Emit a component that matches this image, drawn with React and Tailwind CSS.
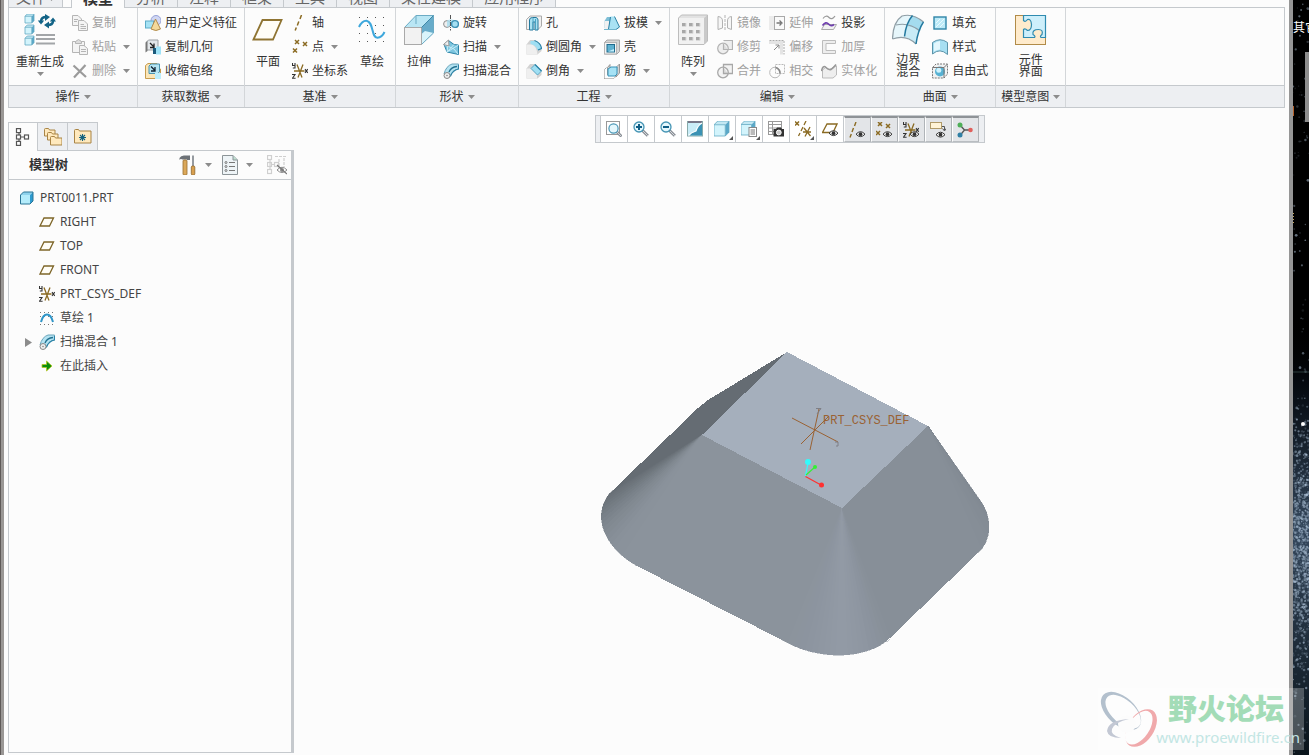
import clsx from "clsx";

const X_MARK = "M0 0l4 4M4 0L0 4";

function Cube({ x = 0, y = 0, s = 9 }) {
  const d = s * 0.25;
  return (
    <g transform={`translate(${x} ${y})`}>
      <path d={`M0 ${d}L${d} 0H${s}L${s - d} ${d}z`} fill="#c3e8f3" />
      <path d={`M${s - d} ${d}L${s} 0V${s - d}L${s - d} ${s}z`} fill="#5aa8c8" />
      <rect y={d} width={s - d} height={s - d} fill="#d3f4fc" />
      <path
        d={`M0 ${d}L${d} 0H${s}V${s - d}L${s - d} ${s}H0zM0 ${d}H${s - d}V${s}`}
        fill="none"
        stroke="#62a9c3"
        strokeWidth="0.8"
      />
    </g>
  );
}

function Eye({ x = 7, y = 9 }) {
  return (
    <g transform={`translate(${x} ${y})`}>
      <path d="M0 3.2Q4.5 -1.8 9 3.2Q4.5 8 0 3.2z" fill="#fff" stroke="#333" />
      <circle cx="4.5" cy="3.2" r="1.9" fill="#333" />
    </g>
  );
}

function Crosses({ points }) {
  return points.map(([x, y]) => (
    <path
      key={`${x}-${y}`}
      d={X_MARK}
      transform={`translate(${x} ${y})`}
      stroke="#8b6b23"
      strokeWidth="1.5"
    />
  ));
}

function Csys() {
  return (
    <g fill="none" strokeWidth="1.3">
      <path d="M5 1.5L10 14.5M11 1.5L6 14.5M2 8H12.5" stroke="#8b6b23" />
      <path
        d="M0.5 0V2.5H3V0M3 2.5V5H0.8M0 11.5H3L0.5 15.2H3.6M13 6.2L15.8 9.8M15.8 6.2L13 9.8"
        stroke="#333"
        strokeWidth="1.1"
      />
    </g>
  );
}

function Lens({ sign }) {
  return (
    <g fill="none">
      <path d="M9.5 9.5L14.8 14.8" stroke="#8a8f96" strokeWidth="3" />
      <path d="M9.5 9.5L14.8 14.8" stroke="#d4d8dc" strokeWidth="1" />
      <circle cx="6" cy="6" r="5" fill="#e4f7fd" stroke="#4695b5" strokeWidth="1.3" />
      <path d={sign} stroke="#0f5e86" strokeWidth="2" />
    </g>
  );
}

function Folder({ x = 0, y = 0, w = 12, h = 9 }) {
  return (
    <path
      transform={`translate(${x} ${y})`}
      d={`M0.5 ${h}V1.5Q0.5 0.5 1.5 0.5H4.5L5.5 2H${w}V${h}z`}
      fill="#ffe9bd"
      stroke="#a98445"
    />
  );
}

const ICONS = {
  regenerate: (
    <>
      <Cube x={1} y={0} />
      <Cube x={1} y={11} />
      <Cube x={1} y={22} />
      <path d="M17 9V7Q17.5 3 22 3" fill="none" stroke="#136487" strokeWidth="2.4" />
      <path d="M21 0L26 3L21 7z" fill="#136487" />
      <path d="M13.8 6.5H20.2L17 10.5z" fill="#136487" />
      <path d="M29 5V7.5Q28.5 11 24 11" fill="none" stroke="#136487" strokeWidth="2.4" />
      <path d="M25 7.5L20 11L25 14.5z" fill="#136487" />
      <path d="M25.8 7.5H32L29 3.5z" fill="#136487" />
      <path d="M12 21H31M12 25H31M12 29.5H31" stroke="#a2a5a8" strokeWidth="1.8" />
    </>
  ),
  copy: (
    <g fill="#f4f4f4" stroke="#b5b5b5">
      <path d="M0.5 0.5H6L9.5 4V10.5H0.5z" />
      <path d="M6.5 5.5H12L15.5 9V15.5H6.5z" />
      <path d="M2 4.5H6M2 6.5H5M8.5 9.5H12M8.5 11.5H14M8.5 13.5H14" />
    </g>
  ),
  paste: (
    <g fill="#f4f4f4" stroke="#b5b5b5">
      <path d="M0.5 2.5H12.5V13.5H0.5z" />
      <path d="M3.5 4.5V2.5L6.5 0.5L9.5 2.5V4.5z" fill="#ddd" />
      <path d="M7.5 6.5H12L15.5 9.5V15.5H7.5z" />
      <path d="M9 10.5H14M9 12.5H14" />
    </g>
  ),
  remove: <path d="M1.5 2.5L14 14M13.5 2L2 14.5" stroke="#9b9b9b" strokeWidth="2.2" />,
  udf: (
    <>
      <circle cx="11" cy="5.5" r="5" fill="#cfd6f3" stroke="#97a2d6" />
      <rect x="0.5" y="6" width="8" height="7" fill="#a5e2f4" stroke="#5cabc8" />
      <path d="M10.5 4L15.5 14Q11 17 6 14z" fill="#f4d99a" stroke="#b08a4a" />
    </>
  ),
  copyGeom: (
    <>
      <path d="M1.5 3L3.5 1H13V11H1.5z" fill="#e3e7ea" stroke="#9a9fa3" />
      <path d="M0.5 3.5L2.5 2V12L0.5 13.5z" fill="#777" />
      <path d="M5 4L9 8M9 4.5V8.5H5" stroke="#222" strokeWidth="1.3" fill="none" />
      <rect x="8" y="9" width="3" height="6" fill="#1b5a7c" />
      <rect x="11" y="7.5" width="5" height="8" fill="#9fe3f8" />
    </>
  ),
  shrinkwrap: (
    <>
      <path d="M0.5 2.5L3 0.5H12V6H15.5V15.5H0.5z" fill="#fbe6b8" stroke="#c79c4e" />
      <path d="M4 3L6 1H14.5V9L12.5 10.5H4z" fill="#b4e4f2" stroke="#4a93b0" />
      <path d="M6 3.5L10 7.5M10 4V8H6" stroke="#123" strokeWidth="1.3" fill="none" />
      <rect x="10" y="10" width="6" height="6" fill="#bdeefc" />
    </>
  ),
  plane: (
    <path d="M1.5 25.5L10.5 6H29.5L21 25.5z" fill="#fffdf6" stroke="#8f7432" strokeWidth="1.8" />
  ),
  axis: <path d="M9.5 0L8 4M6.8 6.5L5.3 10.5M4.3 12.5L3.2 15.5" stroke="#8b6b23" strokeWidth="1.5" />,
  point: <Crosses points={[[3, 1], [11, 3], [1, 9.5]]} />,
  csys: <Csys />,
  sketch: (
    <>
      {[3, 11, 19, 27].map((y) => (
        <path key={y} d={`M3 ${y}.5h25`} stroke="#555" strokeWidth="1" strokeDasharray="1 7" />
      ))}
      <path
        d="M3 13Q6 6.500 10.5 6.7C18 8 15 24 21.5 23.8Q26 23.5 28.5 18"
        fill="none"
        stroke="#3da7dc"
        strokeWidth="2"
      />
    </>
  ),
  extrude: (
    <>
      <path d="M1.5 13.5L13 1.5H30.5L18.5 13.5z" fill="#b9e6f4" />
      <path d="M18.5 13.5L30.5 1.5V19L18.5 30.5z" fill="#68acca" />
      <path d="M18.5 30.5L30.5 19L22 17L18.5 20z" fill="#d9f4fb" />
      <path d="M13 1.5V10M1.5 13.5L13 1.5H30.5V19L18.5 30.5" fill="none" stroke="#6cabc4" />
      <rect x="1.5" y="13.5" width="17" height="17" fill="#f2f2f2" stroke="#a9a9a9" />
      <path d="M18.5 13.5L30.5 1.5" stroke="#3d87a6" />
    </>
  ),
  revolve: (
    <>
      <circle cx="4" cy="9" r="3.4" fill="#eee" stroke="#8d8d8d" />
      <path d="M4 5.5Q8 3.5 12 5.5V12Q8 9 4 12.5z" fill="#a7dcee" opacity="0.8" />
      <circle cx="12" cy="9" r="3.4" fill="#a5dff2" stroke="#3c8fb3" strokeWidth="1.4" />
      <path d="M7.5 0V15.5" stroke="#555" strokeDasharray="4 1 1 1" />
    </>
  ),
  sweep: (
    <>
      <path d="M5.5 1.5L11 5.5L15.5 6V15.5L4 13L1 5.5z" fill="#7cc5df" stroke="#2c83a7" />
      <path d="M5.5 1.5L4 13L11 5.5M4 13L15.5 6M1 5.5L11 10L15 15" fill="none" stroke="#c7edf8" />
      <path d="M0.5 5.5L5.5 1L6 7z" fill="#efefef" stroke="#999" />
    </>
  ),
  sweptBlend: (
    <>
      <path d="M1 11Q3 3 9 1H15.5V6Q9 7 7 14z" fill="#b4e3f2" stroke="#6aa5bb" />
      <path d="M6 9Q8 4 14 3.5" fill="none" stroke="#22708f" strokeWidth="1.3" />
      <path d="M15.5 2V6Q10 7 7.5 13" fill="none" stroke="#2c83a7" strokeWidth="1.2" />
      <circle cx="4" cy="12.5" r="3" fill="#eee" stroke="#888" />
      <circle cx="4" cy="12.5" r="0.8" fill="#888" />
    </>
  ),
  hole: (
    <>
      <path d="M0.5 4.5L4 1H15.5V11L12 14.5H0.5z" fill="#f0f0f0" stroke="#aaa" />
      <path d="M3.5 5Q3.5 2.5 6.5 2.5H10Q12 3 12 5V15H9V7H7V15H3.5z" fill="#a9e1f2" stroke="#24799d" />
      <path d="M7 3V15M9.5 4V15" stroke="#4aa4c5" />
    </>
  ),
  round: (
    <>
      <path d="M0.5 5.5L4 1H9Q15.5 4 15.5 9V12L11.5 15.5H0.5z" fill="#d2d2d2" />
      <path d="M0.5 5.5H6Q10.5 7 11.5 15.5H0.5z" fill="#efefef" />
      <path d="M4.5 2H8.5Q15 4 15 9.5L11.5 11Q10 6 4.5 5z" fill="#9fdff3" />
      <path d="M8.5 1.5Q15 4 15.5 9.5L12 11" fill="none" stroke="#2b83a8" strokeWidth="1.2" />
    </>
  ),
  draft: (
    <>
      <path d="M0.5 6L3 2H8L6 6.5V13H0.5z" fill="#7fbfd6" />
      <path d="M0.5 6H5V14H0.5z" fill="#f1f1f1" />
      <path d="M6.5 1.5H10.5L15.5 12L12 14.5H4.5z" fill="#a9e2f4" />
      <path d="M6.5 2L4.5 14M10.5 1.5L15.5 12L12 14.5" fill="none" stroke="#2a80a4" />
      <path d="M0 14.5H13" stroke="#73b5cd" />
    </>
  ),
  shell: (
    <>
      <path d="M0.5 3.5L3 1H15.5V12.5L13 15H0.5z" fill="#d5d5d5" stroke="#a8a8a8" />
      <rect x="0.5" y="3.5" width="12" height="11.5" fill="#f3f3f3" stroke="#b4b4b4" />
      <rect x="3" y="5.5" width="7.5" height="7.5" fill="#5fb1d0" stroke="#1f6c8e" />
      <path d="M4 12.5L10 10V12.5z" fill="#c3eefb" />
    </>
  ),
  rib: (
    <>
      <path d="M3.5 4.5L6 1.5V9L3.5 12zM13 3.5L15.5 1V10L12 14z" fill="#d2d2d2" stroke="#999" />
      <path d="M4 6L7 4H13V11L11 13H4z" fill="#a6e2f5" stroke="#3692b8" />
      <path d="M0.5 15.5V6.5L3 4M0.5 15.5H10L13 12" fill="none" stroke="#888" strokeDasharray="1 1" />
    </>
  ),
  chamfer: (
    <>
      <path d="M0.5 5.5L4 1H9L15.5 8V12L11.5 15.5H0.5z" fill="#d2d2d2" />
      <path d="M0.5 5.5H5L11 12V15.5H0.5z" fill="#efefef" />
      <path d="M5 5.5L9 1.5L15.5 8L11.5 12z" fill="#9fdff3" stroke="#5fabc8" />
      <path d="M9 1.5L15.5 8" stroke="#2b83a8" strokeWidth="1.2" />
    </>
  ),
  pattern: (
    <>
      <path d="M1.5 4.5L4.5 1H30.5V27L27 30.5H1.5z" fill="#c9c9c9" />
      <rect x="1.5" y="4" width="25.5" height="26.5" fill="#f1f1f1" />
      <path d="M1.5 4L4.5 1H30.5L27 4z" fill="#e2e2e2" />
      <path d="M1.5 4L4.5 1H30.5V27L27 30.5H1.5z" fill="none" stroke="#bdbdbd" />
      {[7, 14, 21].map((x) =>
        [10, 17, 24].map((y) => (
          <g key={`${x}-${y}`}>
            <rect x={x - 2} y={y - 1} width="4" height="4" fill="#a7a7a7" />
            <path d={`M${x - 2} ${y + 2.5}h4v-3.5`} fill="none" stroke="#dadada" />
          </g>
        ))
      )}
    </>
  ),
  mirror: (
    <g fill="none" stroke="#b2b2b2">
      <path d="M1 1.5Q6 2 5.5 7V13L1 14.5zM14.5 1.5Q10 2 10.5 7V13L14.5 14.5z" fill="#f6f6f6" />
      <path d="M8 0V15.5" strokeDasharray="3 1" />
    </g>
  ),
  trim: (
    <g fill="#eee" stroke="#b2b2b2" strokeWidth="1.2">
      <path d="M6.5 1.5H15.5V10.5H10" />
      <circle cx="6" cy="9.5" r="5.3" />
      <path d="M6.5 5V10.5H11" fill="#ddd" />
    </g>
  ),
  merge: (
    <g fill="#f3f3f3" stroke="#a8a8a8" strokeWidth="1.3">
      <path d="M6.5 1.5H15.5V10.5H6.5z" />
      <circle cx="6" cy="9.5" r="5.3" />
      <path d="M6.5 4.5V10.5H11" fill="#ddd" />
    </g>
  ),
  extend: (
    <>
      <rect x="0" y="1" width="6" height="14" fill="#ececec" />
      <rect x="5.5" y="1.5" width="10" height="13" fill="#fafafa" stroke="#a9a9a9" />
      <path d="M7.5 8H12M10.5 5.5L13 8L10.5 10.5" fill="none" stroke="#777" strokeWidth="1.3" />
    </>
  ),
  offset: (
    <>
      <path d="M0 3.5H12.5V15.5" fill="none" stroke="#e4e4e4" strokeWidth="3" />
      <path d="M0.5 1.5H15V15.5" fill="none" stroke="#aaa" strokeDasharray="2 1" />
      <path d="M5 11L10 6M6.5 6H10V9.5" fill="none" stroke="#888" />
    </>
  ),
  intersect: (
    <g fill="none" stroke="#b9b9b9">
      <rect x="6.5" y="1.5" width="9" height="9" strokeDasharray="2 1" />
      <circle cx="6" cy="9.5" r="5.3" />
      <path d="M6.5 4.5Q11 6 11 10.5" stroke="#888" strokeWidth="1.5" />
    </g>
  ),
  project: (
    <g fill="none">
      <path d="M2 3.5Q5 -0.5 8 2.5T14 1" stroke="#999" strokeWidth="1.2" />
      <path d="M0.5 14.5L3.5 9.5H15.5L12.5 14.5z" stroke="#aaa" fill="#f2f2f2" />
      <path d="M1.5 10.5Q5 6 7.5 9T13 9.5" stroke="#6f3fae" strokeWidth="1.7" />
    </g>
  ),
  thicken: (
    <path d="M1.5 1.5H14.5V4.5H5V11.5H14.5V14.5H1.5z" fill="#eee" stroke="#bcbcbc" />
  ),
  solidify: (
    <>
      <path d="M1.5 7L4.5 4.5Q9 8 12 4L15.5 3V12L12 15H1.5z" fill="#eee" stroke="#bbb" />
      <path d="M0.5 8Q2 1.5 5 4.5T10 6.5T15 1.5" fill="none" stroke="#999" strokeWidth="1.6" />
    </>
  ),
  boundary: (
    <>
      <path d="M0.5 25Q1 8 10 2Q21 -1 31.5 8Q26 16 24 30Q14 20 0.5 25z" fill="#e6f6fb" />
      <path d="M20.5 1.5Q27 3.5 31.5 8Q26 16 24 30Q19 25 12.5 22.5Q14 9 20.5 1.5z" fill="#c8ebf6" />
      <path d="M15 12Q23 13 28 17L31 9Q26 3 20 2z" fill="#a4dcef" />
      <path d="M0.5 25Q1 8 10 2Q21 -1 31.5 8M0.5 25Q14 20 24 30M4 11Q17 8 28 17" fill="none" stroke="#8f9ea6" strokeWidth="1.2" />
      <path d="M12.5 22.5Q14 9 20.5 1.5M31.5 8Q26 16 24 30" fill="none" stroke="#23799f" strokeWidth="1.5" />
    </>
  ),
  fill: (
    <>
      <rect x="2" y="2" width="12" height="12" fill="#bdeaf7" stroke="#2f85a8" strokeWidth="1.4" />
      <path d="M4 8L8 4M4 12L12 4M8 12L12 8" stroke="#eafaff" />
    </>
  ),
  style: (
    <>
      <path d="M0.5 3.5Q8 -2 15.5 3.5V15.5Q8 8.5 0.5 15z" fill="#a7dff2" stroke="#5b93a9" />
      <path d="M2 4.5Q5 2 8 2V10.5Q4 11 2 12.5z" fill="#e3f7fd" />
    </>
  ),
  freestyle: (
    <>
      <path d="M0.5 4.5L4 1H15.5V11L12 15H0.5z" fill="#f2f2f2" stroke="#777" strokeDasharray="2 1" />
      <circle cx="8" cy="8.5" r="5" fill="#58b2d3" />
      <circle cx="6.8" cy="7.2" r="2.5" fill="#d0f2fc" />
      <path d="M0.5 4.5H12V15M12 4.5L15.5 1" fill="none" stroke="#777" />
    </>
  ),
  interface: (
    <>
      <rect x="0.5" y="1.5" width="30" height="29" fill="#ffebcc" stroke="#b18b48" />
      <path
        d="M8.5 1.5H30.5V23.5H26Q24.5 22.5 27 20.5Q28.5 15.5 23.5 15.5Q17 15.5 18 20.5Q21 22.5 19.5 23.5H8.5V15.5Q10 14 12.5 16.5Q16.5 16.5 16.5 10.5Q16 4.5 12.5 5.5Q10.5 8.5 8.5 6.5z"
        fill="#cdeffb"
        stroke="#2f8bb0"
        strokeWidth="1.2"
      />
    </>
  ),
  zoomFit: (
    <>
      <rect x="0.5" y="0.5" width="13" height="13" fill="#fff" stroke="#999" />
      <g transform="translate(2 2) scale(0.92)">
        <Lens />
      </g>
    </>
  ),
  zoomIn: <Lens sign="M3 6H9M6 3V9" />,
  zoomOut: <Lens sign="M3 6H9" />,
  repaint: (
    <>
      <rect x="0.5" y="0.5" width="15" height="14.5" fill="#c9edf8" stroke="#8aa" />
      <path d="M15 2V14.5H1.5Q4 11.5 9 10Q11 4 15 2z" fill="#3b92b4" />
      <path d="M1 1H15" stroke="#778" strokeWidth="2" />
      <path d="M15 2Q11 4 9 10Q4 11.5 1.5 14.5" fill="none" stroke="#fff" strokeWidth="1.2" />
    </>
  ),
  display: <Cube s={15} />,
  saved: (
    <>
      <Cube s={14} />
      <rect x="8" y="6.5" width="7.5" height="9" fill="#fff" stroke="#888" />
      <path d="M9.5 9H14M9.5 11H14M9.5 13H14" stroke="#777" />
    </>
  ),
  views: (
    <>
      <rect x="0.5" y="0.5" width="13" height="13" fill="#fff" stroke="#999" />
      <path d="M0.5 3.5H13.5M0.5 7H13.5M0.5 10.5H13.5M4.5 0.5V13.5" stroke="#999" />
      <path d="M5.5 8H8L9 6.5H13L14 8H16V15.5H5.5z" fill="#333" />
      <circle cx="10.8" cy="11.5" r="2.4" fill="#ccc" stroke="#fff" />
    </>
  ),
  datums: (
    <>
      <Crosses points={[[0, 0.5]]} />
      <path d="M11 0L9 4M8 6L6 10M5 12L3.5 15M9 7L15.5 15M15 6L10 15.5M8 11H16" stroke="#8b6b23" strokeWidth="1.3" />
    </>
  ),
  planeShow: (
    <>
      <path d="M0.5 11.5L5 3H15L11 11.5z" fill="none" stroke="#8b6b23" strokeWidth="1.3" />
      <Eye />
    </>
  ),
  axisShow: (
    <>
      <path d="M7 0L5.5 4M4.5 6L3 10M2.3 12L1 15.5" stroke="#8b6b23" strokeWidth="1.4" />
      <Eye />
    </>
  ),
  pointShow: (
    <>
      <Crosses points={[[2, 0], [10, 2], [0, 9]]} />
      <Eye />
    </>
  ),
  csysShow: (
    <>
      <Csys />
      <Eye />
    </>
  ),
  noteShow: (
    <>
      <rect x="0.5" y="0.5" width="11" height="6" fill="#fff3d6" stroke="#b09a68" />
      <path d="M12 4.5H14.5V8M12.5 6.5L14.5 9L16 6.5" fill="none" stroke="#555" />
      <Eye x={6} y={9.5} />
    </>
  ),
  spin: (
    <>
      <path d="M3 3L7.5 8L14 8M7.5 8L3 13.5" fill="none" stroke="#555" strokeWidth="1.3" />
      <circle cx="3" cy="3" r="2.5" fill="#4fae58" />
      <circle cx="13.5" cy="8" r="2.3" fill="#e0605c" />
      <circle cx="3" cy="13" r="2.5" fill="#2f7fa5" />
    </>
  ),
  treeTab: (
    <g fill="#fff" stroke="#555" strokeWidth="1.2">
      <path d="M5 3V15M5 9H12" />
      <rect x="2.5" y="0.6" width="4" height="4" />
      <rect x="2.5" y="7" width="4" height="4" />
      <rect x="2.5" y="13.4" width="4" height="4" />
      <rect x="10.5" y="7" width="4" height="4" />
    </g>
  ),
  folders: (
    <>
      <Folder x={0} y={0} w={11} h={8} />
      <Folder x={3} y={4} w={11} h={8} />
      <Folder x={6} y={8} w={12} h={9} />
    </>
  ),
  favorites: (
    <>
      <Folder x={0} y={1} w={17} h={14} />
      <path d="M8.5 6V13M5 9.5H12M6 7L11 12M11 7L6 12" stroke="#14627f" strokeWidth="1.1" />
    </>
  ),
  hammer: (
    <>
      <path d="M0.5 3Q2 0 6 0.5H11V5H8V4.5H3.5Q1.5 3.5 0.5 5z" fill="#6d7278" />
      <rect x="4" y="5" width="4" height="15" rx="1" fill="#dba85a" stroke="#9a7030" strokeWidth="0.8" />
      <path d="M14 0.5V11" stroke="#8b9096" strokeWidth="1.8" />
      <rect x="12.3" y="11" width="3.5" height="9" rx="1.2" fill="#d9a04f" stroke="#8d642a" strokeWidth="0.8" />
    </>
  ),
  list: (
    <>
      <path d="M0.5 0.5H11L15.5 5V19.5H0.5z" fill="#eef4f7" stroke="#8c9498" />
      <path d="M11 0.5V5H15.5" fill="#bfe0d0" stroke="#8c9498" />
      <path d="M7 7.5H13M7 11.5H13M7 15.5H13" stroke="#777" />
      <g fill="none" stroke="#777">
        <circle cx="4" cy="7.5" r="1" />
        <circle cx="4" cy="11.5" r="1" />
        <circle cx="4" cy="15.5" r="1" />
      </g>
    </>
  ),
  hidden: (
    <>
      <g fill="none" stroke="#cfcfcf" strokeWidth="1.2">
        <path d="M3 4V15M5 9.5H8M8 1.5H20M12 4V14M17 3V12" strokeDasharray="3 1" />
        <rect x="0.5" y="0.5" width="4" height="4" />
        <rect x="0.5" y="7.5" width="4" height="4" />
        <rect x="0.5" y="14.5" width="4" height="4" />
        <rect x="7.5" y="7.5" width="4" height="4" />
      </g>
      <path d="M10 15Q15 9.5 20 15Q15 20 10 15z" fill="#fff" stroke="#8b8b8b" />
      <circle cx="15" cy="15" r="2" fill="#8b8b8b" />
      <path d="M10 10L20 19" stroke="#777" strokeWidth="1.2" />
    </>
  ),
  part: (
    <>
      <path d="M1.5 5L4.5 2H14L11 5z" fill="#8ed2ec" />
      <path d="M11 5L14 2V11L11 14z" fill="#2d9bd0" />
      <rect x="1.5" y="5" width="9.5" height="9" fill="#b4ecfb" />
      <path d="M1.5 5L4.5 2H14V11L11 14H1.5z" fill="none" stroke="#2b7495" strokeLinejoin="round" />
    </>
  ),
  planeSmall: <path d="M1 12L5 4H14.5L10.5 12z" fill="#fffdf6" stroke="#7d6528" strokeWidth="1.3" />,
  sketchSmall: (
    <>
      <path d="M1 2.5H15M1 14.5H15M1 6.5H15" stroke="#777" strokeDasharray="1 3" />
      <path d="M2 12Q4 4.5 8 4.5T14 12" fill="none" stroke="#2f95c8" strokeWidth="2" />
    </>
  ),
  insert: <path d="M3 6.5H7.5V3L13 8L7.5 13V9.5H3z" fill="#0b8f0b" stroke="#b7c520" strokeWidth="0.8" />,
};

function Icon({ name, size = 16 }) {
  return (
    <svg width={size} height={size} viewBox={`0 0 ${size} ${size}`} className="shrink-0" aria-hidden="true">
      {ICONS[name]}
    </svg>
  );
}

function Arrow({ className }) {
  return (
    <svg width="7" height="4" viewBox="0 0 7 4" className={clsx("shrink-0", className)} aria-hidden="true">
      <path d="M0 0H7L3.5 4z" fill="#8c8c8c" />
    </svg>
  );
}

const TABS = ["分析", "注释", "框架", "工具", "视图", "柔性建模", "应用程序"];

const GROUPS = [
  {
    label: "操作",
    items: [
      { big: true, icon: "regenerate", lines: ["重新生成"], arrow: true },
      [
        { icon: "copy", text: "复制", disabled: true },
        { icon: "paste", text: "粘贴", disabled: true, arrow: true },
        { icon: "remove", text: "删除", disabled: true, arrow: true },
      ],
    ],
  },
  {
    label: "获取数据",
    items: [
      [
        { icon: "udf", text: "用户定义特征" },
        { icon: "copyGeom", text: "复制几何" },
        { icon: "shrinkwrap", text: "收缩包络" },
      ],
    ],
  },
  {
    label: "基准",
    items: [
      { big: true, icon: "plane", lines: ["平面"] },
      [
        { icon: "axis", text: "轴" },
        { icon: "point", text: "点", arrow: true },
        { icon: "csys", text: "坐标系" },
      ],
      { big: true, icon: "sketch", lines: ["草绘"] },
    ],
  },
  {
    label: "形状",
    items: [
      { big: true, icon: "extrude", lines: ["拉伸"] },
      [
        { icon: "revolve", text: "旋转" },
        { icon: "sweep", text: "扫描", arrow: true },
        { icon: "sweptBlend", text: "扫描混合" },
      ],
    ],
  },
  {
    label: "工程",
    items: [
      [
        { icon: "hole", text: "孔" },
        { icon: "round", text: "倒圆角", arrow: true },
        { icon: "chamfer", text: "倒角", arrow: true },
      ],
      [
        { icon: "draft", text: "拔模", arrow: true },
        { icon: "shell", text: "壳" },
        { icon: "rib", text: "筋", arrow: true },
      ],
    ],
  },
  {
    label: "编辑",
    items: [
      { big: true, icon: "pattern", lines: ["阵列"], arrow: true },
      [
        { icon: "mirror", text: "镜像", disabled: true },
        { icon: "trim", text: "修剪", disabled: true },
        { icon: "merge", text: "合并", disabled: true },
      ],
      [
        { icon: "extend", text: "延伸", disabled: true },
        { icon: "offset", text: "偏移", disabled: true },
        { icon: "intersect", text: "相交", disabled: true },
      ],
      [
        { icon: "project", text: "投影" },
        { icon: "thicken", text: "加厚", disabled: true },
        { icon: "solidify", text: "实体化", disabled: true },
      ],
    ],
  },
  {
    label: "曲面",
    items: [
      { big: true, icon: "boundary", lines: ["边界", "混合"] },
      [
        { icon: "fill", text: "填充" },
        { icon: "style", text: "样式" },
        { icon: "freestyle", text: "自由式" },
      ],
    ],
  },
  {
    label: "模型意图",
    items: [{ big: true, icon: "interface", lines: ["元件", "界面"] }],
  },
];

const VIEW_TOOLS = [
  { icon: "zoomFit", label: "重新调整" },
  { icon: "zoomIn", label: "放大" },
  { icon: "zoomOut", label: "缩小" },
  { icon: "repaint", label: "重画" },
  { icon: "display", label: "显示样式", menu: true },
  { icon: "saved", label: "已保存方向", menu: true },
  { icon: "views", label: "视图管理器" },
  { icon: "datums", label: "基准显示过滤器", menu: true },
  { icon: "planeShow", label: "平面显示" },
  { icon: "axisShow", label: "轴显示", on: true },
  { icon: "pointShow", label: "点显示", on: true },
  { icon: "csysShow", label: "坐标系显示", on: true },
  { icon: "noteShow", label: "注释显示", on: true },
  { icon: "spin", label: "旋转中心", on: true },
];

const TREE = [
  { icon: "planeSmall", text: "RIGHT" },
  { icon: "planeSmall", text: "TOP" },
  { icon: "planeSmall", text: "FRONT" },
  { icon: "csys", text: "PRT_CSYS_DEF" },
  { icon: "sketchSmall", text: "草绘 1" },
  { icon: "sweptBlend", text: "扫描混合 1", expandable: true },
  { icon: "insert", text: "在此插入" },
];

function BigButton({ icon, lines, arrow }) {
  return (
    <button className="flex flex-col items-center pt-[3px]">
      <Icon name={icon} size={32} />
      <span className={clsx("mt-2", lines.length > 1 ? "leading-3" : "leading-4")}>
        {lines.map((line) => (
          <span key={line} className="block">
            {line}
          </span>
        ))}
      </span>
      {arrow && <Arrow className="mt-0.5" />}
    </button>
  );
}

function SmallButton({ icon, text, arrow, disabled }) {
  return (
    <button disabled={disabled} className={clsx("flex h-6 items-center gap-1", disabled && "text-[#a0a0a0]")}>
      <Icon name={icon} />
      <span>{text}</span>
      {arrow && <Arrow className="ml-[3px]" />}
    </button>
  );
}

function Tab({ children, active, className }) {
  return (
    <button
      className={clsx(
        "flex h-7 shrink-0 items-end border-r border-[#c5c9cd] pb-0.5 leading-4",
        active ? "border-l bg-[#fcfcfc] font-bold text-[#333]" : "border-b bg-[#edeff2]",
        className
      )}
    >
      {children}
    </button>
  );
}

function Ribbon() {
  return (
    <header className="px-1 whitespace-nowrap">
      <nav className="relative -mb-px flex h-2 items-end overflow-hidden text-[15px] text-[#666]">
        <Tab className="border-l px-[7px]">
          文件
          <Arrow className="mb-1 ml-0.5" />
        </Tab>
        <Tab active className="ml-2 px-[11px]">
          模型
        </Tab>
        {TABS.map((tab) => (
          <Tab key={tab} className="px-[11px]">
            {tab}
          </Tab>
        ))}
      </nav>
      <div className="flex border border-[#c5c9cd]">
        {GROUPS.map((group) => (
          <section key={group.label} className="flex shrink-0 flex-col border-r border-[#d3d6d9]">
            <div className="flex flex-1 justify-center gap-2 px-[7px] pt-[3px] pb-0.5">
              {group.items.map((item, index) =>
                item.big ? (
                  <BigButton key={index} {...item} />
                ) : (
                  <div key={index} className="flex flex-col">
                    {item.map((entry) => (
                      <SmallButton key={entry.text} {...entry} />
                    ))}
                  </div>
                )
              )}
            </div>
            <button className="flex h-[22px] items-center justify-center gap-1 border-t border-[#c5c9cd] bg-[#edeff2] px-[5px]">
              {group.label}
              <Arrow />
            </button>
          </section>
        ))}
        <div className="flex flex-1 flex-col justify-end">
          <div className="h-[22px] border-t border-[#c5c9cd] bg-[#edeff2]" />
        </div>
      </div>
    </header>
  );
}

function ModelTree() {
  return (
    <aside className="flex w-[286px] shrink-0 flex-col pt-3.5">
      <div className="flex">
        {["treeTab", "folders", "favorites"].map((name, index) => (
          <button
            key={name}
            aria-label={["模型树", "文件夹浏览器", "收藏夹"][index]}
            className={clsx(
              "flex w-[30px] items-center justify-center border-t border-r border-[#c5c9cd]",
              index === 0 ? "relative -mb-px h-[29px] border-l bg-[#fcfcfc]" : "h-7 bg-[#edeff2]"
            )}
          >
            <Icon name={name} size={18} />
          </button>
        ))}
      </div>
      <div className="flex flex-1 flex-col border border-r-[3px] border-[#c5c9cd]">
        <div className="flex h-[29px] items-center border-b border-[#c5c9cd] pr-1 pl-5">
          <h2 className="flex-1 text-[13px] font-bold">模型树</h2>
          <button aria-label="设置" className="flex items-center gap-1.5">
            <Icon name="hammer" size={20} />
            <Arrow />
          </button>
          <button aria-label="显示" className="ml-2.5 flex items-center gap-1">
            <Icon name="list" size={20} />
            <Arrow />
          </button>
          <button aria-label="隐藏项" className="ml-3.5">
            <Icon name="hidden" size={20} />
          </button>
        </div>
        <ul className="pt-1.5 pl-2.5 text-[#444]">
          <li className="flex h-6 items-center gap-[5px]">
            <Icon name="part" />
            PRT0011.PRT
          </li>
          {TREE.map((node) => (
            <li key={node.text} className="flex h-6 items-center gap-[5px]">
              <span className="flex w-[15px] justify-center">
                {node.expandable && (
                  <svg width="7" height="9" viewBox="0 0 7 9" className="ml-1">
                    <path d="M0 0L7 4.5L0 9z" fill="#8c8c8c" />
                  </svg>
                )}
              </span>
              <Icon name={node.icon} />
              {node.text}
            </li>
          ))}
        </ul>
      </div>
    </aside>
  );
}

function ViewToolbar() {
  return (
    <div className="flex h-7 items-stretch border border-[#c5c9cd] bg-white">
      <span className="w-[5px] border-r border-[#c5c9cd] bg-[#edeff2]" />
      {VIEW_TOOLS.map((tool) => (
        <button
          key={tool.icon}
          aria-label={tool.label}
          aria-pressed={tool.on}
          className={clsx(
            "relative flex w-[27px] items-center justify-center border-r",
            tool.on
              ? "border border-t-2 border-l-white border-t-[#8f9397] border-r-[#b0b4b8] border-b-[#b9bdc1] bg-[#e3e5e8]"
              : "border-[#c5c9cd]"
          )}
        >
          <Icon name={tool.icon} />
          {tool.menu && (
            <svg width="4" height="4" viewBox="0 0 4 4" className="absolute right-0.5 bottom-0.5">
              <path d="M4 0V4H0z" fill="#555" />
            </svg>
          )}
        </button>
      ))}
      <span className="w-[5px] bg-[#edeff2]" />
    </div>
  );
}

function mix(a, b, t) {
  return `rgb(${a.map((v, i) => Math.round(v + (b[i] - v) * t)).join(",")})`;
}

// Splits a conical corner into flat facets along a cubic edge.
function Fan({ apex, curve, stops, steps = 20 }) {
  const [p0, p1, p2, p3] = curve;
  const at = (t) =>
    [0, 1].map(
      (i) =>
        (1 - t) ** 3 * p0[i] +
        3 * (1 - t) ** 2 * t * p1[i] +
        3 * (1 - t) * t ** 2 * p2[i] +
        t ** 3 * p3[i]
    );
  const color = (t) => {
    const pos = t * (stops.length - 1);
    const i = Math.min(Math.floor(pos), stops.length - 2);
    return mix(stops[i], stops[i + 1], pos - i);
  };
  return Array.from({ length: steps }, (_, k) => {
    const fill = color((k + 0.5) / steps);
    return (
      <polygon
        key={k}
        points={[apex, at(k / steps), at((k + 1) / steps)].map((p) => p.join(",")).join(" ")}
        fill={fill}
        stroke={fill}
        strokeWidth="0.5"
      />
    );
  });
}

function Model() {
  return (
    <svg width="410" height="330" viewBox="585 340 410 330" role="img" aria-label="PRT0011">
      <g shapeRendering="crispEdges">
        <polygon points="787,352 708,400 698,408 612,491 702,435" fill="#656c73" />
        <polygon points="702,435 842,508 782,640 637,566" fill="#8b939c" />
        <polygon points="842,508 928,426 978,553 890,638" fill="#878f98" />
        <Fan
          apex={[702, 435]}
          curve={[[612, 491], [592, 511], [600, 545], [637, 566]]}
          stops={[[101, 108, 115], [112, 120, 127], [128, 136, 144], [138, 146, 155], [139, 147, 156]]}
        />
        <Fan
          apex={[842, 508]}
          curve={[[782, 640], [820, 662], [868, 659], [890, 638]]}
          stops={[[139, 147, 156], [141, 149, 160], [146, 155, 166], [141, 149, 160], [135, 143, 152]]}
        />
        <Fan
          apex={[928, 426]}
          curve={[[978, 553], [992, 540], [992, 519], [982, 503]]}
          stops={[[135, 143, 152], [132, 140, 149], [127, 135, 144]]}
          steps={10}
        />
        <polygon points="787,352 928,426 842,508 702,435" fill="#a5afbc" />
      </g>
      <g fill="none" stroke="#9a6233">
        <path d="M792 418L838 442M819 409L810 450M829 416L801 444" />
        <path d="M816 408.5H821L817 414M835 442H838V446H836" stroke="#7e7f86" />
      </g>
      <text x="823" y="424" fontSize="12" fill="#9a6233" className="font-['Liberation_Mono',monospace]">
        PRT_CSYS_DEF
      </text>
      <g fill="none" strokeWidth="1.2">
        <path d="M805.5 476L808 463" stroke="#33fbfb" />
        <path d="M806 475L815 467" stroke="#33f033" />
        <path d="M805.5 476.5L821 485" stroke="#ff3030" />
      </g>
      <circle cx="808" cy="462" r="3" fill="#33fbfb" />
      <circle cx="815" cy="467" r="2" fill="#33f033" />
      <circle cx="821.5" cy="485" r="2.5" fill="#ff3030" />
    </svg>
  );
}

let seed = 7;
function random() {
  seed = (seed * 16807) % 2147483647;
  return seed / 2147483647;
}

// Stars crowd together along the galaxy band in the lower part of the sky.
const STARS = Array.from({ length: 1000 }, (_, i) => {
  const spread = (random() + random() + random()) / 3;
  return {
    x: random() * 16,
    y: i < 140 ? random() * 755 : 370 + spread * 350,
    r: 0.5 + random() * 0.9,
    o: 0.1 + random() * 0.45,
  };
});

function Desktop() {
  return (
    <aside className="flex w-4 shrink-0 flex-col overflow-hidden bg-linear-to-b from-black from-40% via-[#34475c] via-70% to-[#0b151c]">
      <div className="relative flex-1">
        <svg viewBox="0 0 16 755" preserveAspectRatio="none" className="absolute inset-0 size-full">
          {STARS.map((star, i) => (
            <circle key={i} cx={star.x} cy={star.y} r={star.r} fill="#b6cbe0" opacity={star.o} />
          ))}
          <path d="M0 372H16" stroke="#2c3c3c" />
          <circle cx="10" cy="424" r="2" fill="#fff" />
          <path d="M0.5 106V116" stroke="#b5602a" />
          <path d="M0.5 213V224" stroke="#c2a35a" strokeDasharray="1 2" />
        </svg>
        <p className="relative mt-5 leading-4 whitespace-nowrap text-white">其它</p>
        <div className="relative mt-4 ml-3 h-[70px] bg-[#8d8d8d]" />
      </div>
    </aside>
  );
}

function Watermark() {
  return (
    <div className="absolute right-[5px] bottom-[5px] flex h-[62px] items-center bg-white/25">
      <svg width="62" height="60" viewBox="0 0 62 60" className="mt-1" aria-hidden="true">
        <g fillRule="evenodd">
          <path
            transform="rotate(42 23 20)"
            d="M-1 20a24 14 0 1 0 48 0a24 14 0 1 0 -48 0M3.5 19a21.5 11.5 0 1 1 43 0a21.5 11.5 0 1 1 -43 0"
            fill="#b3c0cd"
          />
          <path
            transform="rotate(-56 43 37)"
            d="M22 37a21 13 0 1 0 42 0a21 13 0 1 0 -42 0M23 35a19 10.5 0 1 1 38 0a19 10.5 0 1 1 -38 0"
            fill="#f0a9ab"
          />
        </g>
        <circle cx="29" cy="33" r="9" fill="#fcfcfc" />
        <path d="M31 28Q10 29 9 40Q10 47 23 47Q12 44 14 38Q17 31 31 28z" fill="#c3c8d4" />
      </svg>
      <div className="-ml-1 flex flex-col pr-1 text-center">
        <span className="pr-1 text-[29px] leading-9 font-black text-[#a3dcb7]">野火论坛</span>
        <span className="text-[15px] leading-5 text-[#c3e6e4]">www.proewildfire.cn</span>
      </div>
    </div>
  );
}

export default function App() {
  return (
    <div className="relative flex h-screen overflow-hidden bg-[#fcfcfc] font-['Noto_Sans','Noto_Sans_CJK_SC',sans-serif] text-xs text-[#333]">
      <div className="w-1 shrink-0 border-r-[3px] border-[#9a9795] bg-[#5f5a58]" />
      <div className="flex min-w-0 flex-1 flex-col border-r-4 border-[#969696]">
        <Ribbon />
        <div className="flex flex-1 pb-0.5 pl-1">
          <ModelTree />
          <main className="flex flex-1 flex-col items-center pt-[7px] pr-1">
            <ViewToolbar />
            <div className="mt-[197px]">
              <Model />
            </div>
          </main>
        </div>
      </div>
      <Desktop />
      <Watermark />
    </div>
  );
}
